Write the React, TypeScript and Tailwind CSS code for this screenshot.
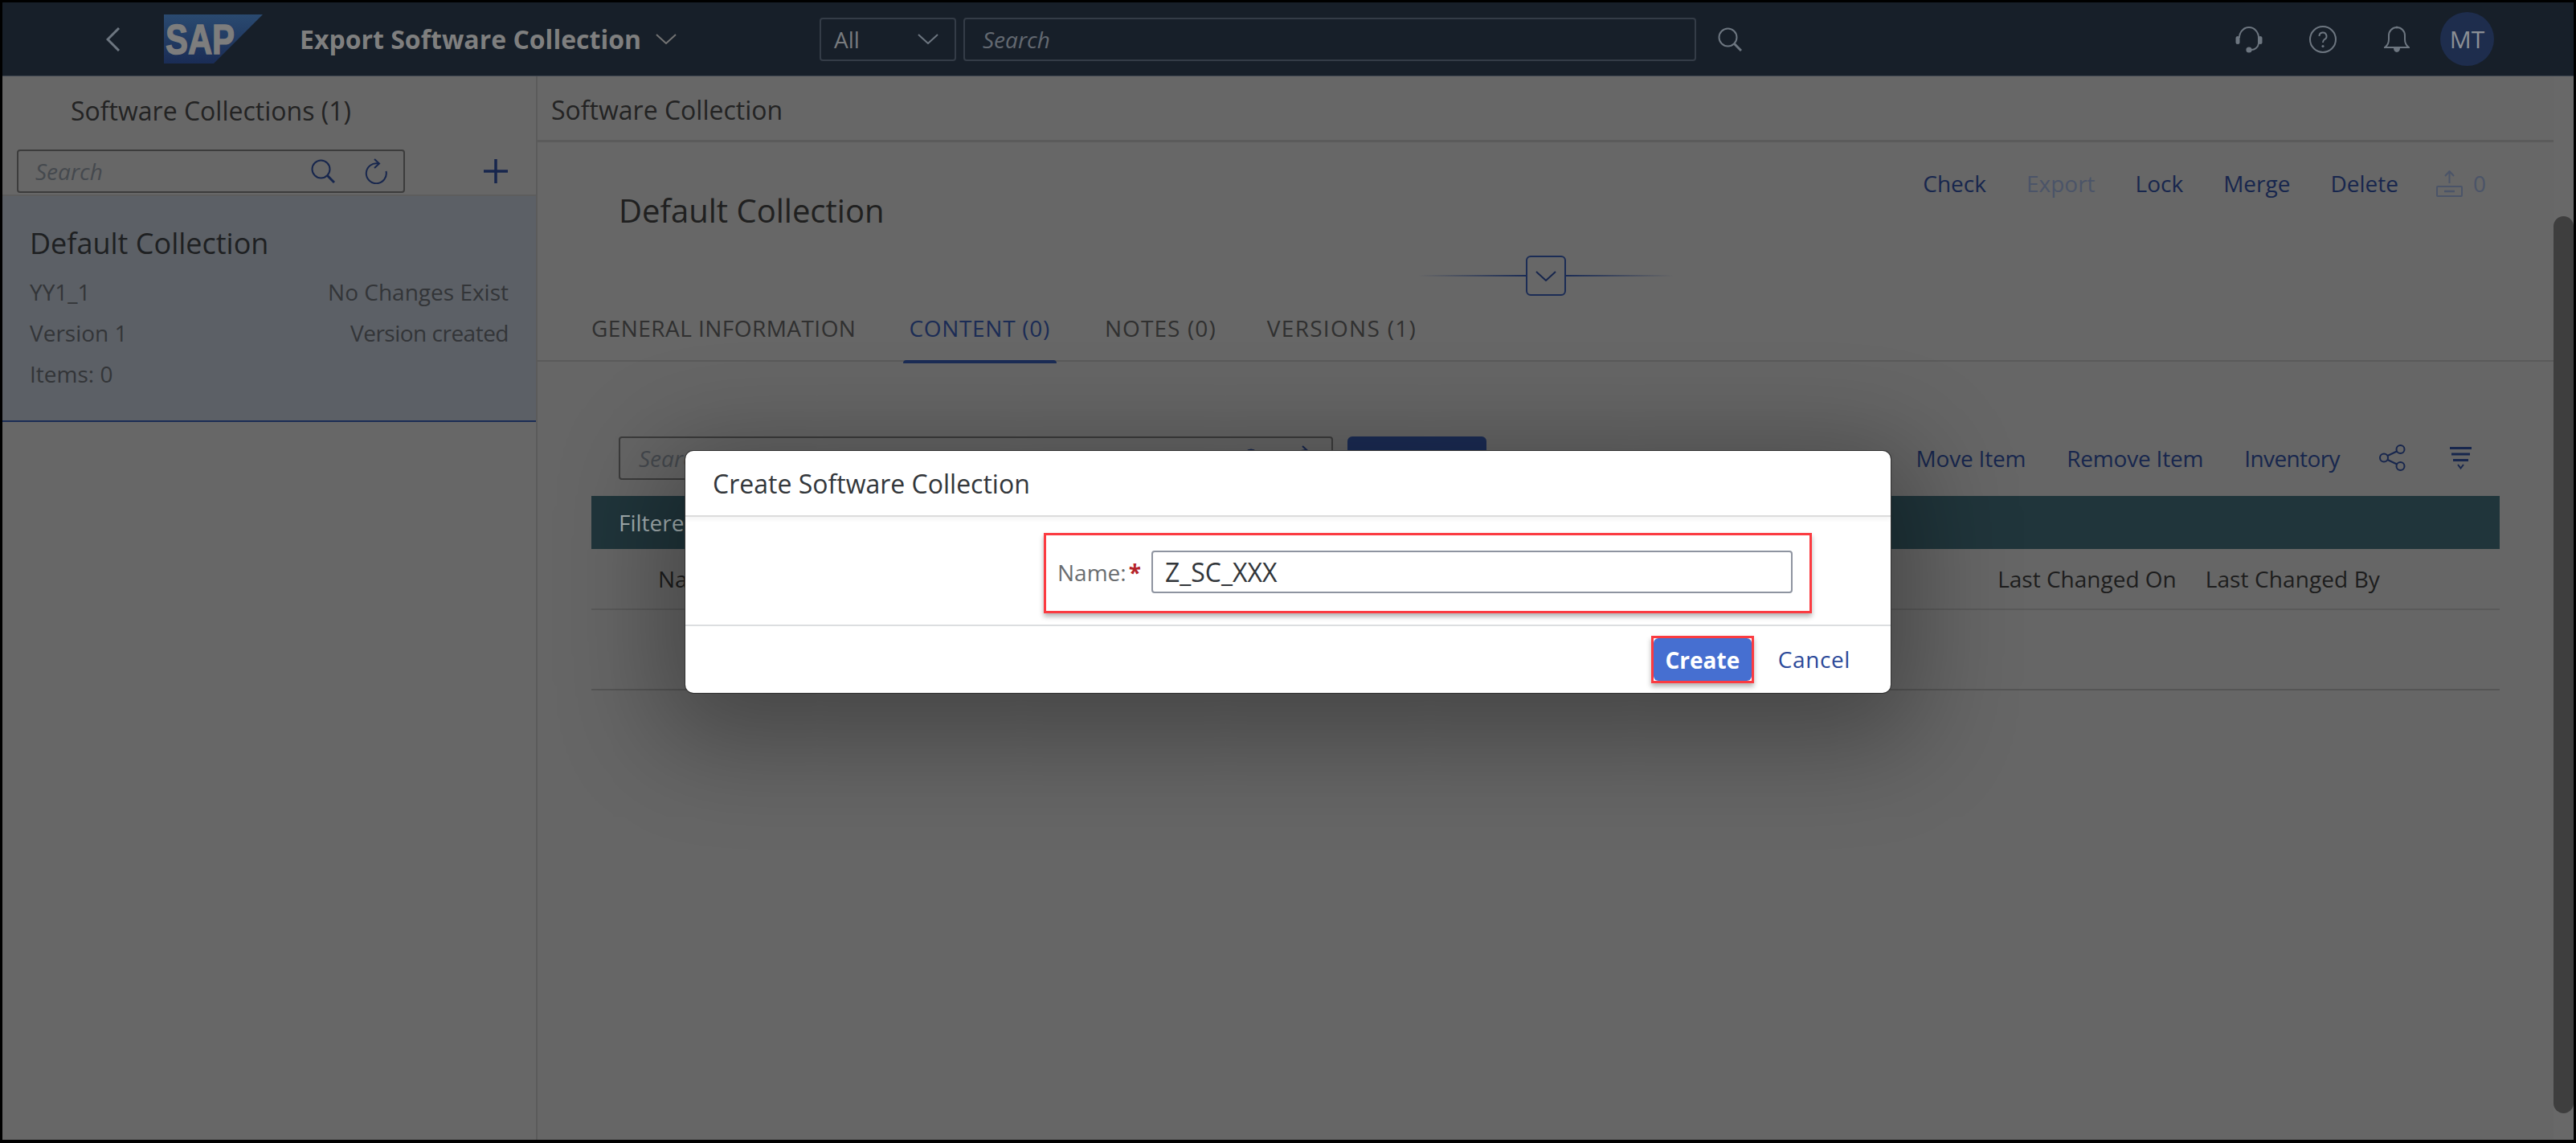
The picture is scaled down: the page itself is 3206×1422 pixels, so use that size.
import type { ReactNode } from 'react';

function Icon({ w, h, box, children, className = '' }: { w: number; h: number; box: string; children: ReactNode; className?: string }) {
  return (
    <svg width={w} height={h} viewBox={box} fill="none" stroke="currentColor" strokeWidth="2" className={`shrink-0 ${className}`}>
      {children}
    </svg>
  );
}

function SearchIcon({ size = 30, className = '' }: { size?: number; className?: string }) {
  return (
    <Icon w={size} h={size} box="0 0 30 30" className={className}>
      <circle cx="12.5" cy="12.5" r="11" />
      <path d="M20.5 20.5 L29 29" strokeWidth="3" />
    </Icon>
  );
}

function Chevron({ w = 26, h = 13, className = '' }: { w?: number; h?: number; className?: string }) {
  return (
    <svg width={w} height={h} viewBox="0 0 26 13" fill="none" stroke="currentColor" strokeWidth="2" className={`shrink-0 ${className}`}>
      <path d="M1 1 L13 12 L25 1" />
    </svg>
  );
}

function RefreshIcon({ className = '' }: { className?: string }) {
  return (
    <Icon w={28} h={32} box="0 0 28 32" className={className}>
      <path d="M17 6.5 A12.5 12.5 0 1 0 26.5 16" />
      <path d="M12 1 L18 6.5 L12 12" />
    </Icon>
  );
}

function SapLogo() {
  return (
    <svg width="123" height="61" viewBox="0 0 123 61" className="shrink-0">
      <defs>
        <linearGradient id="sapfill" x1="0" y1="0" x2="0" y2="1">
          <stop offset="0" stopColor="#2a4a70" />
          <stop offset="1" stopColor="#1a2c55" />
        </linearGradient>
      </defs>
      <polygon points="0,0 123,0 62,61 0,61" fill="url(#sapfill)" />
      <text x="2" y="49" textLength="86" lengthAdjust="spacingAndGlyphs" fontFamily="'Liberation Sans', sans-serif" fontWeight="700" fontSize="51" fill="#7d7d7d" stroke="#7d7d7d" strokeWidth="1.5">SAP</text>
    </svg>
  );
}

function Headset() {
  return (
    <Icon w={34} h={34} box="0 0 34 34">
      <path d="M5 15 A12 13 0 0 1 29 15 L29 22 A9 9 0 0 1 19 30" />
      <rect x="0.5" y="13" width="5" height="10" rx="2.5" fill="currentColor" stroke="none" />
      <rect x="28.5" y="13" width="5" height="10" rx="2.5" fill="currentColor" stroke="none" />
      <circle cx="17" cy="30" r="3.6" fill="currentColor" stroke="none" />
    </Icon>
  );
}

function Help() {
  return (
    <svg width="34" height="34" viewBox="0 0 34 34" fill="none" stroke="currentColor" strokeWidth="2" className="shrink-0">
      <circle cx="17" cy="17" r="16" />
      <path d="M12.5 13 A4.5 4.5 0 1 1 19 17 C17.5 18 17 19 17 21" />
      <circle cx="17" cy="25.5" r="1.6" fill="currentColor" stroke="none" />
    </svg>
  );
}

function Bell() {
  return (
    <Icon w={32} h={34} box="0 0 32 34">
      <path d="M1 27 C4 25 6 22 6 17 L6 12 A10 10 0 0 1 26 12 L26 17 C26 22 28 25 31 27 Z" />
      <circle cx="16" cy="2" r="1.5" fill="currentColor" stroke="none" />
      <path d="M12 28 A4 5 0 0 0 20 28 Z" fill="currentColor" stroke="none" />
    </Icon>
  );
}

function ExportQueue() {
  return (
    <Icon w={33} h={33} box="0 0 33 33" className="text-[#4b5468]">
      <path d="M16.5 16 L16.5 1 M11 7 L16.5 1 L22 7" />
      <rect x="1" y="20" width="31" height="12" rx="1" />
      <path d="M10 26 H23" strokeWidth="2.5" />
    </Icon>
  );
}

function Share() {
  return (
    <Icon w={33} h={33} box="0 0 33 33">
      <circle cx="6" cy="16.5" r="5" />
      <circle cx="26.5" cy="6" r="5" />
      <circle cx="26.5" cy="27" r="5" />
      <path d="M10.5 14 L22 8.5 M10.5 19 L22 24.5" />
    </Icon>
  );
}

function SortIcon() {
  return (
    <svg width="27" height="28" viewBox="0 0 27 28" fill="none" stroke="currentColor" strokeWidth="3" className="shrink-0">
      <path d="M0 1.5 H27 M2 9 H25 M4 16.5 H23" />
      <path d="M10 22 L13.5 26.5 L17 22" strokeWidth="2" />
    </svg>
  );
}

function ActionLink({ children, disabled }: { children: ReactNode; disabled?: boolean }) {
  return <span className={disabled ? 'text-[#4b5468]' : 'text-[#17264d]'}>{children}</span>;
}

function Header() {
  return (
    <header className="flex h-[92px] shrink-0 items-center border-b border-[#3f4650] bg-[#171f29] text-[#6d7680]">
      <svg width="18" height="30" viewBox="0 0 18 30" fill="none" stroke="currentColor" strokeWidth="3" className="ml-[129px] shrink-0">
        <path d="M16 1 L2 15 L16 29" />
      </svg>
      <div className="ml-[54px]">
        <SapLogo />
      </div>
      <span className="ml-[46px] text-[32px] font-bold text-[#7f7f7f]">Export Software Collection</span>
      <Chevron className="ml-[18px] text-[#737373]" />
      <div className="ml-[178px] flex h-[54px] w-[170px] items-center justify-between rounded-[4px] border-2 border-[#343c47] pl-[16px] pr-[20px] text-[28px] text-[#787b7e]">
        All
        <Chevron className="text-[#6d7680]" />
      </div>
      <div className="ml-[9px] flex h-[54px] w-[912px] items-center rounded-[4px] border-2 border-[#343c47] pl-[22px] text-[28px] italic text-[#636971]">Search</div>
      <SearchIcon className="ml-[27px]" />
      <div className="ml-auto mr-[99px] flex items-center">
        <Headset />
        <div className="ml-[58px]"><Help /></div>
        <div className="ml-[59px]"><Bell /></div>
        <div className="ml-[38px] flex h-[67px] w-[67px] items-center justify-center rounded-full bg-[#1e2d4d] text-[30px] text-[#8b8f95]">MT</div>
      </div>
    </header>
  );
}

function Sidebar() {
  return (
    <aside className="flex w-[666px] shrink-0 flex-col border-r-2 border-[#5b5b5b]">
      <div className="flex h-[82px] shrink-0 items-center pl-[85px] pt-[3px] text-[32px] text-[#232323]">Software Collections (1)</div>
      <div className="flex h-[67px] shrink-0 items-start border-b-2 border-[#5d5d5d] pl-[18px] pt-[9px]">
        <div className="flex h-[54px] w-[483px] items-center rounded-[4px] border-2 border-[#3c3c3c] pl-[21px] text-[28px] italic text-[#45494e]">
          Search
          <SearchIcon className="ml-auto text-[#17264d]" />
          <RefreshIcon className="ml-[37px] mr-[20px] text-[#17264d]" />
        </div>
        <svg width="30" height="30" viewBox="0 0 30 30" stroke="#17264d" strokeWidth="3.5" className="ml-[98px] mt-[12px] shrink-0">
          <path d="M15 0 V30 M0 15 H30" />
        </svg>
      </div>
      <div className="flex h-[281px] shrink-0 flex-col border-b-2 border-[#1b2c55] bg-[#5c6066] px-[34px] pt-[36px] text-[28px] text-[#333538]">
        <div className="mb-[11px] text-[36px] leading-[46px] text-[#1e2022]">Default Collection</div>
        <div className="flex h-[51px] items-center justify-between"><span>YY1_1</span><span>No Changes Exist</span></div>
        <div className="flex h-[51px] items-center justify-between"><span>Version 1</span><span className="tracking-[-0.5px]">Version created</span></div>
        <div className="flex h-[51px] items-center"><span>Items: 0</span></div>
      </div>
    </aside>
  );
}

function CollectionHead() {
  return (
    <div className="shrink-0">
      <div className="flex h-[141px] items-start justify-between pt-[29px]">
        <div className="ml-[101px] mt-[31px] text-[40px] leading-[50px] text-[#202020]">Default Collection</div>
        <div className="mr-[84px] flex items-center gap-[50px] text-[28px] leading-[44px]">
          <ActionLink>Check</ActionLink>
          <ActionLink disabled>Export</ActionLink>
          <ActionLink>Lock</ActionLink>
          <ActionLink>Merge</ActionLink>
          <ActionLink>Delete</ActionLink>
          <span className="-ml-[3px] flex items-center gap-[13px] text-[#4b5468]"><ExportQueue />0</span>
        </div>
      </div>
      <div className="flex items-center justify-center text-[#1b2c55]">
        <div className="h-[2px] w-[134px] bg-gradient-to-r from-transparent to-[#1b2c55]" />
        <div className="flex h-[50px] w-[50px] items-center justify-center rounded-[6px] border-2 border-[#1b2c55]">
          <Chevron className="text-[#17264d]" />
        </div>
        <div className="h-[2px] w-[134px] bg-gradient-to-l from-transparent to-[#1b2c55]" />
      </div>
      <div className="mt-[14px] flex h-[68px] items-start border-b-2 border-[#5a5a5a] pl-[67px] text-[28px] leading-[36px] text-[#303030]">
        <span className="pt-[8px] tracking-[0.45px]">GENERAL INFORMATION</span>
        <span className="relative ml-[66px] pt-[8px] tracking-[0.7px] text-[#1b2c55]">
          CONTENT (0)
          <span className="absolute bottom-[-26px] left-[-7px] right-[-8px] h-[4px] rounded-t-[4px] bg-[#1b2c55]" />
        </span>
        <span className="ml-[68px] pt-[8px] tracking-[1.1px]">NOTES (0)</span>
        <span className="ml-[63px] pt-[8px] tracking-[1.3px]">VERSIONS (1)</span>
      </div>
    </div>
  );
}

function ContentTable() {
  return (
    <div className="flex-1 bg-[#666666] px-[67px] pt-[92px]">
      <div className="flex h-[55px] items-center pl-[34px] pr-[35px] text-[28px] text-[#17264d]">
        <div className="flex h-[54px] w-[889px] items-center rounded-[4px] border-2 border-[#3c3c3c] pl-[23px] italic text-[#45494e]">
          Search
          <SearchIcon size={24} className="ml-auto text-[#17264d]" />
          <RefreshIcon className="ml-[38px] mr-[20px] text-[#17264d]" />
        </div>
        <div className="ml-[18px] flex h-[54px] w-[173px] items-center justify-center rounded-[6px] bg-[#1b2c55] text-[#888c96]">Add Item</div>
        <span className="ml-[40px]">Add Multiple Items</span>
        <span className="ml-auto tracking-[-0.2px]">Move Item</span>
        <span className="ml-[51px] tracking-[-0.2px]">Remove Item</span>
        <span className="ml-[51px] tracking-[-0.6px]">Inventory</span>
        <div className="ml-[49px]"><Share /></div>
        <div className="ml-[55px]"><SortIcon /></div>
      </div>
      <div className="mt-[20px] flex h-[66px] items-center bg-[#20353b] pl-[34px] text-[28px] text-[#a3aeb0]">Filtered By: None</div>
      <div className="flex h-[76px] items-center border-b-2 border-[#5a5a5a] pl-[83px] pr-[149px] text-[28px] text-[#1d1d1d]">
        <span>Name</span>
        <span className="ml-auto">Last Changed On</span>
        <span className="ml-[36px] tracking-[0.1px]">Last Changed By</span>
      </div>
      <div className="h-[100px] border-b-2 border-[#555555]" />
    </div>
  );
}

function CreateDialog() {
  return (
    <div className="absolute left-[850px] top-[558px] flex h-[301px] w-[1500px] flex-col rounded-[10px] bg-white font-['Open_Sans',sans-serif] shadow-[0_0_0_1px_#333,0_30px_130px_30px_rgba(0,0,0,0.32)]">
      <div className="flex h-[82px] shrink-0 items-center border-b-2 border-[#dcdcdc] pl-[34px] pt-[2px] text-[32px] text-[#32363a] shadow-[0_3px_6px_rgba(0,0,0,0.05)]">Create Software Collection</div>
      <div className="h-[136px] shrink-0 border-b-2 border-[#dcdee0] pl-[446px] pt-[20px]">
        <div className="flex h-[100px] w-[956px] items-center border-[3px] border-[#fb3b41] pb-[3px] pl-[14px] text-[28px] shadow-[0_4px_6px_rgba(0,0,0,0.3)]">
          <span className="text-[#6a6d70]">Name:</span>
          <span className="ml-[3px] font-bold text-[#b5242a]">*</span>
          <div className="ml-[13px] flex h-[53px] w-[798px] items-center rounded-[4px] border-2 border-[#8e94a0] pl-[15px] text-[32px] text-[#32363a]">Z_SC_XXX</div>
        </div>
      </div>
      <div className="flex flex-1 items-start justify-end pr-[50px] pt-[12px] text-[28px]">
        <div className="h-[59px] w-[128px] border-[3px] border-[#fb3b41] shadow-[0_4px_6px_rgba(0,0,0,0.3)]">
          <div className="flex h-full items-center justify-center rounded-[6px] bg-[#466fd1] font-bold text-white">Create</div>
        </div>
        <span className="ml-[30px] mt-[8px] tracking-[0.6px] text-[#2c4a9a]">Cancel</span>
      </div>
    </div>
  );
}

export default function App() {
  return (
    <div className="relative flex h-[1422px] w-[3206px] flex-col overflow-hidden border-b-[4px] border-l-[3px] border-r-[3px] border-t-[3px] border-black bg-[#676767] font-['Open_Sans',sans-serif]">
      <Header />
      <div className="flex min-h-0 flex-1">
        <Sidebar />
        <main className="flex min-w-0 flex-1 flex-col">
          <div className="flex h-[82px] shrink-0 items-center border-b-[3px] border-[#5b5b5b] pl-[17px] pt-[5px] text-[32px] text-[#232323]">Software Collection</div>
          <CollectionHead />
          <ContentTable />
        </main>
        <div className="w-[25px] shrink-0 bg-[#686868] pb-[33px] pt-[174px]">
          <div className="h-full rounded-[14px] bg-[#3e3e3e]" />
        </div>
      </div>
      <CreateDialog />
    </div>
  );
}
